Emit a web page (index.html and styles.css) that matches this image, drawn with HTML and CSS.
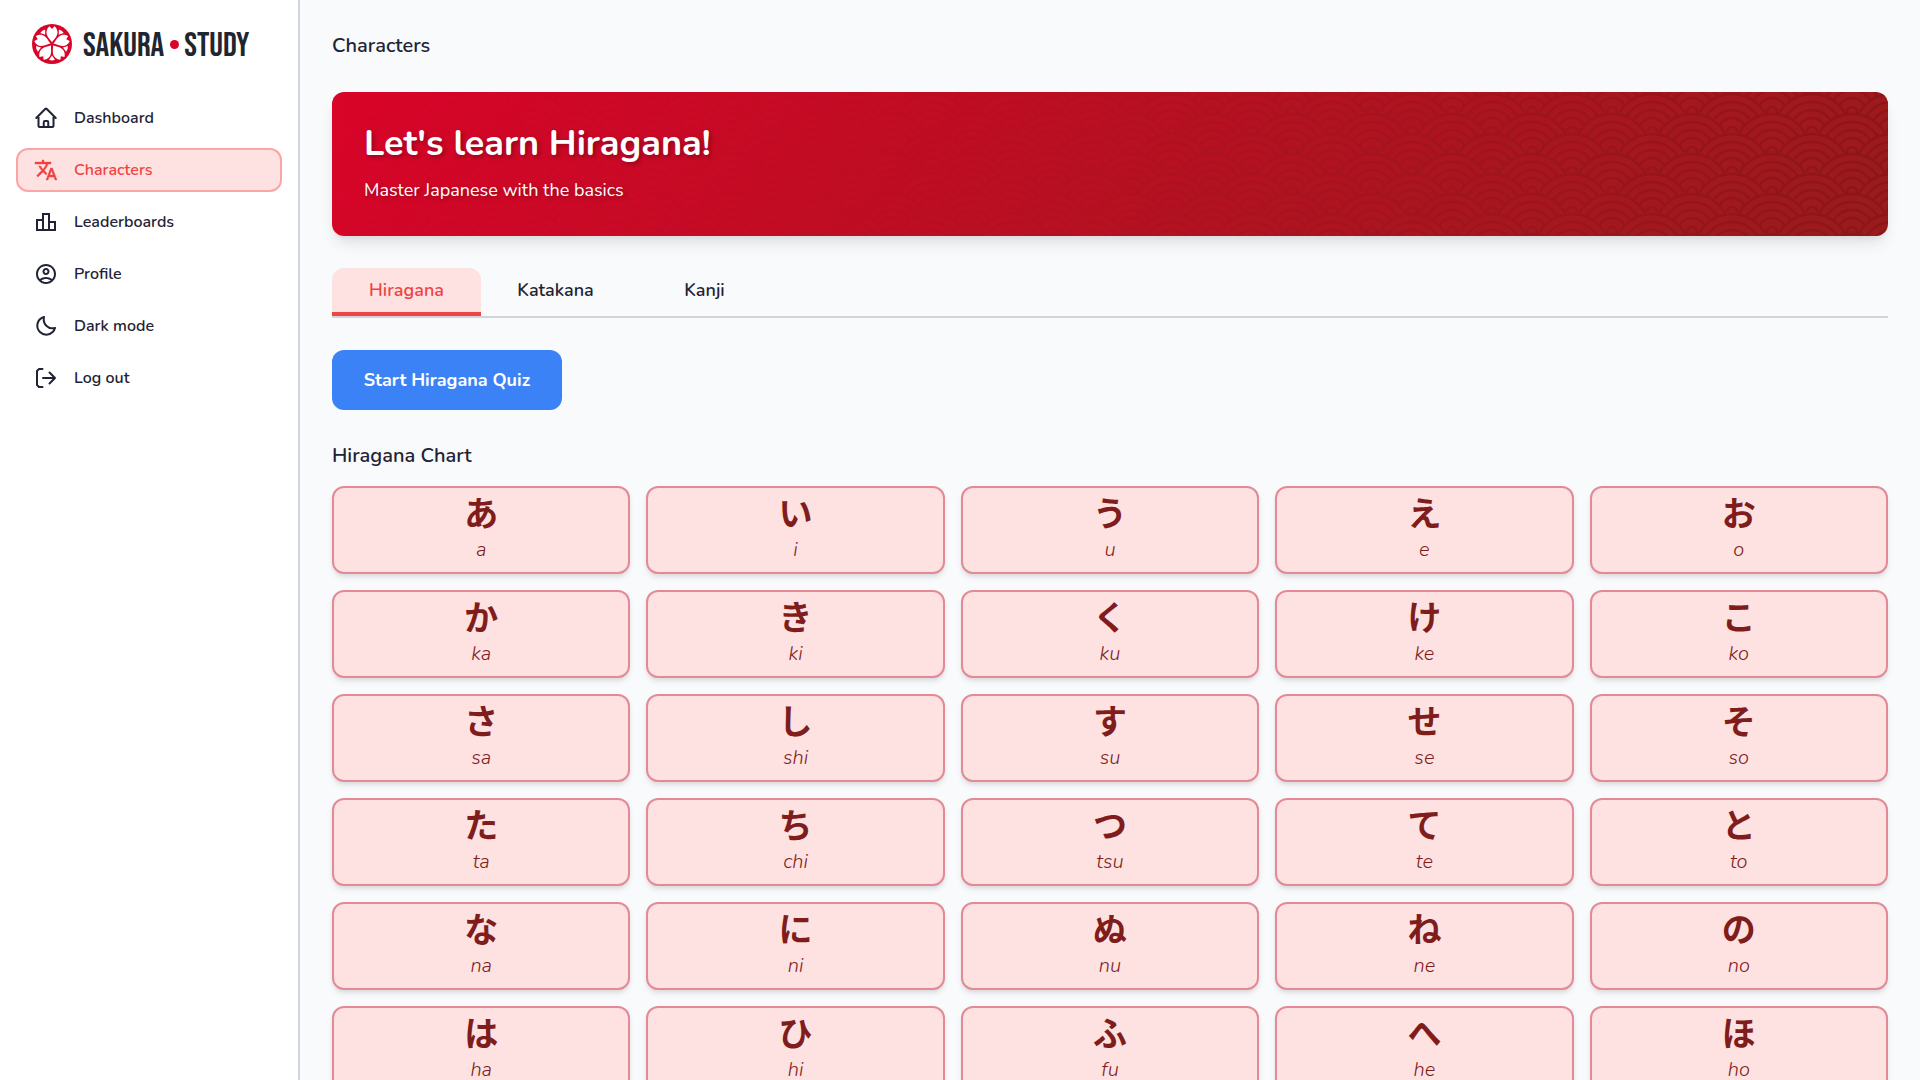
FILE: index.html
```html
<!DOCTYPE html>
<html lang="en">
<head>
    <meta charset="UTF-8">
    <meta name="viewport" content="width=device-width, initial-scale=1.0">
    <title>Sakura Study - Characters</title>
    <link rel="stylesheet" href="styles.css">
</head>
<body>
    <aside class="sidebar">
        <a class="logo" href="#">
            <svg class="logo-mark" viewBox="-20 -20 40 40" aria-hidden="true">
                <defs>
                    <path id="petal" d="M0-1.500C-1-4-5.500-7-5.500-11.500C-5.500-14.500-4-16.500-2.500-17.800L0-15L2.500-17.800C4-16.500 5.500-14.500 5.500-11.500C5.500-7 1-4 0-1.500Z"/>
                    <path id="gap" d="M0-11.500L-3-15.800Q0-17 3-15.800Z"/>
                </defs>
                <circle r="20" fill="#d90429"/>
                <g fill="#fff">
                    <use href="#petal"/>
                    <use href="#petal" transform="rotate(72)"/>
                    <use href="#petal" transform="rotate(144)"/>
                    <use href="#petal" transform="rotate(216)"/>
                    <use href="#petal" transform="rotate(288)"/>
                    <use href="#gap" transform="rotate(36)"/>
                    <use href="#gap" transform="rotate(108)"/>
                    <use href="#gap" transform="rotate(180)"/>
                    <use href="#gap" transform="rotate(252)"/>
                    <use href="#gap" transform="rotate(324)"/>
                </g>
            </svg>
            <span class="logo-text">SAKURA<span class="logo-dot"></span>STUDY</span>
        </a>
        <nav class="menu">
            <a class="menu-item" href="#">
                <svg class="icon line" viewBox="0 0 24 24"><path d="m2.250 12 8.954-8.955c.44-.439 1.152-.439 1.591 0L21.750 12M4.500 9.750v10.125c0 .621.504 1.125 1.125 1.125H9.750v-4.875c0-.621.504-1.125 1.125-1.125h2.250c.621 0 1.125.504 1.125 1.125V21h4.125c.621 0 1.125-.504 1.125-1.125V9.750M8.250 21h8.250"/></svg>
                Dashboard
            </a>
            <a class="menu-item active" href="#">
                <svg class="icon" viewBox="0 0 24 24"><path stroke="currentColor" stroke-width=".4" stroke-linejoin="round" d="M12.870 15.070l-2.540-2.510.03-.03A17.520 17.520 0 0014.070 6H17V4h-7V2H8v2H1v2h11.170C11.500 7.920 10.440 9.750 9 11.350 8.070 10.320 7.300 9.190 6.690 8h-2c.73 1.630 1.730 3.170 2.980 4.560l-5.090 5.020L4 19l5-5 3.110 3.110.76-2.040zM18.500 10h-2L12 22h2l1.120-3h4.750L21 22h2l-4.500-12zm-2.620 7l1.620-4.330L19.120 17h-3.240z"/></svg>
                Characters
            </a>
            <a class="menu-item" href="#">
                <svg class="icon" viewBox="0 0 24 24"><path d="M16 11V3H8v6H2v12h20V11h-6zm-6-6h4v14h-4V5zm-6 6h4v8H4v-8zm16 8h-4v-6h4v6z"/></svg>
                Leaderboards
            </a>
            <a class="menu-item" href="#">
                <svg class="icon" viewBox="0 0 24 24"><path d="M12 2C6.480 2 2 6.480 2 12s4.480 10 10 10 10-4.480 10-10S17.520 2 12 2zM7.350 18.500C8.660 17.560 10.260 17 12 17s3.340.56 4.650 1.500c-1.310.94-2.910 1.500-4.650 1.500s-3.340-.56-4.650-1.500zm10.790-1.380C16.450 15.800 14.320 15 12 15s-4.450.8-6.140 2.120C4.700 15.730 4 13.950 4 12c0-4.420 3.580-8 8-8s8 3.580 8 8c0 1.950-.7 3.730-1.860 5.120zM12 6c-1.930 0-3.500 1.570-3.500 3.500S10.070 13 12 13s3.500-1.570 3.500-3.500S13.930 6 12 6zm0 5c-.83 0-1.500-.67-1.500-1.500S11.170 8 12 8s1.500.67 1.500 1.500S12.830 11 12 11z"/></svg>
                Profile
            </a>
            <button class="menu-item" type="button">
                <svg class="icon" viewBox="0 0 24 24"><path d="M20.742 13.045a8.088 8.088 0 0 1-2.077.271c-2.135 0-4.140-.83-5.646-2.336a8.025 8.025 0 0 1-2.064-7.723A1 1 0 0 0 9.730 2.034a10.014 10.014 0 0 0-4.489 2.582c-3.898 3.898-3.898 10.243 0 14.143a9.937 9.937 0 0 0 7.072 2.930 9.930 9.930 0 0 0 7.070-2.929 10.007 10.007 0 0 0 2.583-4.491 1.001 1.001 0 0 0-1.224-1.224zm-2.772 4.301a7.947 7.947 0 0 1-5.656 2.343 7.953 7.953 0 0 1-5.658-2.344c-3.118-3.119-3.118-8.195 0-11.314a7.923 7.923 0 0 1 2.060-1.483 10.027 10.027 0 0 0 2.890 7.848 9.972 9.972 0 0 0 7.848 2.891 8.036 8.036 0 0 1-1.484 2.059z"/></svg>
                Dark mode
            </button>
            <button class="menu-item" type="button">
                <svg class="icon line" viewBox="0 0 24 24"><path d="M8.500 3H5L3 5v14l2 2h3.500M9 12h12M15.500 6.500L21 12l-5.500 5.500"/></svg>
                Log out
            </button>
        </nav>
    </aside>

    <main class="content">
        <h1 class="page-title">Characters</h1>

        <section class="banner">
            <svg class="waves" aria-hidden="true">
                <defs>
                    <g id="scale" fill="#000" stroke="#fff" stroke-width="2.500">
                        <circle r="38"/>
                        <circle r="30"/>
                        <circle r="22"/>
                        <circle r="14"/>
                        <circle r="5"/>
                    </g>
                    <pattern id="seigaiha" width="80" height="40" patternUnits="userSpaceOnUse">
                        <use href="#scale" x="0" y="20"/><use href="#scale" x="80" y="20"/>
                        <use href="#scale" x="40" y="40"/>
                        <use href="#scale" x="0" y="60"/><use href="#scale" x="80" y="60"/>
                        <use href="#scale" x="40" y="80"/>
                    </pattern>
                    <mask id="wave-mask">
                        <rect width="100%" height="100%" fill="url(#seigaiha)"/>
                    </mask>
                    <linearGradient id="wave-fade">
                        <stop offset="0" stop-color="#7f1d1d" stop-opacity="0"/>
                        <stop offset=".5" stop-color="#7f1d1d" stop-opacity=".12"/>
                        <stop offset="1" stop-color="#7a1015" stop-opacity=".45"/>
                    </linearGradient>
                </defs>
                <rect width="100%" height="100%" fill="url(#wave-fade)" mask="url(#wave-mask)"/>
            </svg>
            <h2>Let's learn Hiragana!</h2>
            <p>Master Japanese with the basics</p>
        </section>

        <div class="tabs" role="tablist">
            <button class="tab active" type="button" role="tab" aria-selected="true">Hiragana</button>
            <button class="tab" type="button" role="tab">Katakana</button>
            <button class="tab" type="button" role="tab">Kanji</button>
        </div>

        <button class="quiz-btn" type="button">Start Hiragana Quiz</button>

        <h3 class="chart-title">Hiragana Chart</h3>
        <div class="chart">
            <div class="card"><span class="kana" lang="ja">あ</span><em>a</em></div>
            <div class="card"><span class="kana" lang="ja">い</span><em>i</em></div>
            <div class="card"><span class="kana" lang="ja">う</span><em>u</em></div>
            <div class="card"><span class="kana" lang="ja">え</span><em>e</em></div>
            <div class="card"><span class="kana" lang="ja">お</span><em>o</em></div>

            <div class="card"><span class="kana" lang="ja">か</span><em>ka</em></div>
            <div class="card"><span class="kana" lang="ja">き</span><em>ki</em></div>
            <div class="card"><span class="kana" lang="ja">く</span><em>ku</em></div>
            <div class="card"><span class="kana" lang="ja">け</span><em>ke</em></div>
            <div class="card"><span class="kana" lang="ja">こ</span><em>ko</em></div>

            <div class="card"><span class="kana" lang="ja">さ</span><em>sa</em></div>
            <div class="card"><span class="kana" lang="ja">し</span><em>shi</em></div>
            <div class="card"><span class="kana" lang="ja">す</span><em>su</em></div>
            <div class="card"><span class="kana" lang="ja">せ</span><em>se</em></div>
            <div class="card"><span class="kana" lang="ja">そ</span><em>so</em></div>

            <div class="card"><span class="kana" lang="ja">た</span><em>ta</em></div>
            <div class="card"><span class="kana" lang="ja">ち</span><em>chi</em></div>
            <div class="card"><span class="kana" lang="ja">つ</span><em>tsu</em></div>
            <div class="card"><span class="kana" lang="ja">て</span><em>te</em></div>
            <div class="card"><span class="kana" lang="ja">と</span><em>to</em></div>

            <div class="card"><span class="kana" lang="ja">な</span><em>na</em></div>
            <div class="card"><span class="kana" lang="ja">に</span><em>ni</em></div>
            <div class="card"><span class="kana" lang="ja">ぬ</span><em>nu</em></div>
            <div class="card"><span class="kana" lang="ja">ね</span><em>ne</em></div>
            <div class="card"><span class="kana" lang="ja">の</span><em>no</em></div>

            <div class="card"><span class="kana" lang="ja">は</span><em>ha</em></div>
            <div class="card"><span class="kana" lang="ja">ひ</span><em>hi</em></div>
            <div class="card"><span class="kana" lang="ja">ふ</span><em>fu</em></div>
            <div class="card"><span class="kana" lang="ja">へ</span><em>he</em></div>
            <div class="card"><span class="kana" lang="ja">ほ</span><em>ho</em></div>
        </div>
    </main>
</body>
</html>
```
FILE: styles.css
```css
* {
    box-sizing: border-box;
}
body {
    margin: 0;
    display: flex;
    min-height: 100vh;
    background-color: #f9fafc;
    color: #1f2335;
    font-family: Nunito, Lato, "Noto Sans CJK JP", sans-serif;
    font-size: 18px;
}
h1, h2, h3, p {
    margin: 0;
}
button {
    font-family: inherit;
    color: inherit;
    border: none;
    background: none;
    cursor: pointer;
}

/* Sidebar */
.sidebar {
    flex: 0 0 300px;
    padding: 24px 16px;
    background-color: #fff;
    border-right: 2px solid #d1d5db;
}
.logo {
    display: flex;
    align-items: center;
    gap: 11px;
    height: 40px;
    padding-left: 16px;
    margin-bottom: 32px;
    text-decoration: none;
    color: #1f2630;
}
.logo-mark {
    width: 40px;
    height: 40px;
}
.logo-text {
    display: flex;
    align-items: center;
    font-family: "Bebas Neue", "Roboto Condensed", "Liberation Sans Narrow", Roboto, sans-serif;
    font-size: 34px;
    font-weight: 400;
    line-height: 40px;
    padding-top: 4px;
}
.logo-dot {
    width: 9px;
    height: 9px;
    margin: 0 5px 4px 6px;
    border-radius: 50%;
    background-color: #d90429;
}
.menu {
    display: flex;
    flex-direction: column;
    gap: 8px;
}
.menu-item {
    display: flex;
    align-items: center;
    gap: 16px;
    width: 100%;
    height: 44px;
    padding: 0 16px;
    border: 2px solid transparent;
    border-radius: 12px;
    color: #1f2335;
    font-size: 16px;
    font-weight: 600;
    text-decoration: none;
}
.menu-item:hover {
    background-color: #f3f4f6;
}
.menu-item.active {
    background-color: #fee2e2;
    border-color: #fca5a5;
    color: #ef4444;
}
.icon {
    width: 24px;
    height: 24px;
    fill: currentColor;
}
.icon.line {
    fill: none;
    stroke: currentColor;
    stroke-width: 2;
    stroke-linecap: round;
    stroke-linejoin: round;
}

/* Main content */
.content {
    flex: 1;
    min-width: 0;
    padding: 32px;
    padding-bottom: 16px;
}
.page-title,
.chart-title {
    font-size: 20px;
    font-weight: 600;
    line-height: 28px;
}
.banner {
    position: relative;
    overflow: hidden;
    margin: 32px 0;
    padding: 32px;
    border-radius: 12px;
    background: linear-gradient(135deg, #d90429, #991b1b);
    box-shadow: 0 10px 15px -3px rgba(0,0,0,0.1), 0 4px 6px -2px rgba(0,0,0,0.05);
    color: #fff;
    text-shadow: 2px 2px 4px rgba(0,0,0,0.3);
}
.waves {
    position: absolute;
    top: 0;
    left: 0;
    width: 100%;
    height: 100%;
}
.banner h2 {
    position: relative;
    margin-bottom: 12px;
    font-size: 36px;
    font-weight: 700;
    line-height: 40px;
}
.banner p {
    position: relative;
    line-height: 28px;
}
.tabs {
    display: flex;
    margin-bottom: 32px;
    border-bottom: 2px solid #d1d5db;
}
.tab {
    width: 149px;
    height: 48px;
    padding: 0;
    border-bottom: 4px solid transparent;
    border-radius: 12px 12px 0 0;
    font-size: 18px;
    font-weight: 600;
}
.tab.active {
    background-color: #fee2e2;
    border-bottom: none;
    padding-bottom: 4px;
    box-shadow: inset 0 -4px #ef4444;
    color: #ef4444;
}
.quiz-btn {
    display: block;
    min-width: 230px;
    height: 60px;
    padding: 0 24px;
    margin-bottom: 32px;
    border-radius: 12px;
    background-color: #3b82f6;
    color: #fff;
    font-size: 18px;
    font-weight: 700;
}
.chart-title {
    margin-bottom: 16px;
}
.chart {
    display: grid;
    grid-template-columns: repeat(5, 1fr);
    gap: 16px;
}
.card {
    display: flex;
    flex-direction: column;
    align-items: center;
    height: 88px;
    padding-top: 4px;
    border: 2px solid #e48a97;
    border-radius: 12px;
    background-color: #fee2e2;
    box-shadow: 0 4px 6px -1px rgba(0,0,0,0.1), 0 2px 4px -1px rgba(0,0,0,0.06);
    color: #7f1d1d;
}
.kana {
    font-family: "Noto Sans CJK JP", sans-serif;
    font-size: 34px;
    font-weight: 600;
    line-height: 40px;
}
.card em {
    font-size: 20px;
    font-weight: 300;
    line-height: 36px;
}
```
